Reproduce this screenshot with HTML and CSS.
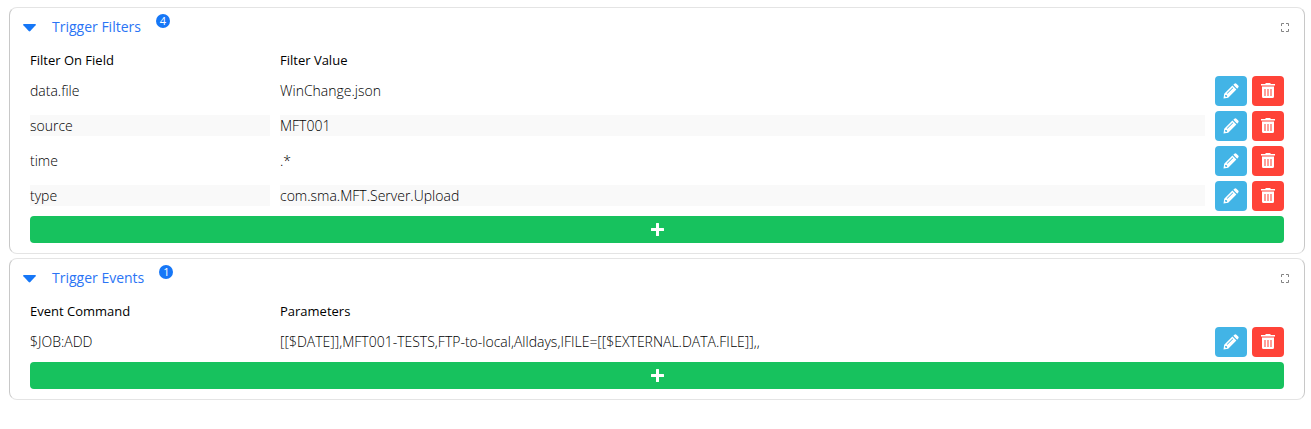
FILE: index.html
```html
<!DOCTYPE html>
<html lang="en">
<head>
<meta charset="utf-8">
<title>Trigger Filters and Events</title>
<link rel="stylesheet" href="styles.css">
</head>
<body>
<svg class="symbols" aria-hidden="true">
  <symbol id="pencil" viewBox="0 0 16 16">
    <path fill="#fff" fill-rule="evenodd" d="M9.4 2.6 13.4 6.6 5.2 14.8 .5 15.5 1.2 10.8zM10.3 1.7 11.4.7Q12.4-.1 13.4.8L15.2 2.6Q16.1 3.6 15.2 4.6L14.2 5.7zM3.8 10.2 4.4 10.8 10.2 5 9.6 4.4zM2.3 11.9 1.9 13 3 14.1 4.1 13.7 4 12.2z"/>
  </symbol>
  <symbol id="trash" viewBox="0 0 14 16">
    <path fill="#fff" d="M4 1 5 0H9L10 1H14V2.4H0V1zM1 3.5H13V13.5Q13 15 11.5 15H2.5Q1 15 1 13.5z"/>
    <path fill="#ff9f99" d="M3 6H5V13H3zM6 6H8V13H6zM9 6H11V13H9z"/>
  </symbol>
  <symbol id="plus" viewBox="0 0 13 13">
    <path fill="#fff" d="M5.5 0H7.5Q8 0 8 .5V5H12.5Q13 5 13 5.5V7.5Q13 8 12.5 8H8V12.5Q8 13 7.5 13H5.5Q5 13 5 12.5V8H.5Q0 8 0 7.5V5.5Q0 5 .5 5H5V.5Q5 0 5.5 0z"/>
  </symbol>
  <symbol id="expand" viewBox="0 0 8 9">
    <path fill="none" stroke="#858585" d="M.5 3V.5H3M5 .5H7.5V3M7.5 6V8.5H5M3 8.5H.5V6"/>
  </symbol>
  <symbol id="caret" viewBox="0 0 13 8">
    <path fill="#1677f7" d="M.7 0H12.3Q13.3.4 12.6 1.2L7.3 7.1Q6.5 7.9 5.7 7.1L.4 1.2Q-.3.4.7 0z"/>
  </symbol>
</svg>
<main class="page">
  <section class="panel">
    <header class="panel-header">
      <button class="toggle" type="button" aria-expanded="true"><svg class="caret"><use href="#caret"/></svg><span class="title">Trigger Filters</span></button>
      <span class="badge">4</span>
      <button class="expand" type="button" aria-label="Expand Trigger Filters"><svg class="expand-icon"><use href="#expand"/></svg></button>
    </header>
    <table class="grid">
      <thead><tr><th class="key-col">Filter On Field</th><th>Filter Value</th><th class="action-col" aria-label="Actions"></th></tr></thead>
      <tbody>
        <tr><td><div class="cell">data.file</div></td><td><div class="cell">WinChange.json</div></td><td><div class="actions"><button class="action edit" type="button" aria-label="Edit data.file"><svg class="pencil"><use href="#pencil"/></svg></button><button class="action delete" type="button" aria-label="Delete data.file"><svg class="trash"><use href="#trash"/></svg></button></div></td></tr>
        <tr><td><div class="cell">source</div></td><td><div class="cell">MFT001</div></td><td><div class="actions"><button class="action edit" type="button" aria-label="Edit source"><svg class="pencil"><use href="#pencil"/></svg></button><button class="action delete" type="button" aria-label="Delete source"><svg class="trash"><use href="#trash"/></svg></button></div></td></tr>
        <tr><td><div class="cell">time</div></td><td><div class="cell">.*</div></td><td><div class="actions"><button class="action edit" type="button" aria-label="Edit time"><svg class="pencil"><use href="#pencil"/></svg></button><button class="action delete" type="button" aria-label="Delete time"><svg class="trash"><use href="#trash"/></svg></button></div></td></tr>
        <tr><td><div class="cell">type</div></td><td><div class="cell">com.sma.MFT.Server.Upload</div></td><td><div class="actions"><button class="action edit" type="button" aria-label="Edit type"><svg class="pencil"><use href="#pencil"/></svg></button><button class="action delete" type="button" aria-label="Delete type"><svg class="trash"><use href="#trash"/></svg></button></div></td></tr>
      </tbody>
    </table>
    <button class="add" type="button" aria-label="Add filter"><svg class="plus"><use href="#plus"/></svg></button>
  </section>
  <section class="panel">
    <header class="panel-header">
      <button class="toggle" type="button" aria-expanded="true"><svg class="caret"><use href="#caret"/></svg><span class="title">Trigger Events</span></button>
      <span class="badge">1</span>
      <button class="expand" type="button" aria-label="Expand Trigger Events"><svg class="expand-icon"><use href="#expand"/></svg></button>
    </header>
    <table class="grid">
      <thead><tr><th class="key-col">Event Command</th><th>Parameters</th><th class="action-col" aria-label="Actions"></th></tr></thead>
      <tbody>
        <tr><td><div class="cell">$JOB:ADD</div></td><td><div class="cell">[[$DATE]],MFT001-TESTS,FTP-to-local,Alldays,IFILE=[[$EXTERNAL.DATA.FILE]],,</div></td><td><div class="actions"><button class="action edit" type="button" aria-label="Edit event"><svg class="pencil"><use href="#pencil"/></svg></button><button class="action delete" type="button" aria-label="Delete event"><svg class="trash"><use href="#trash"/></svg></button></div></td></tr>
      </tbody>
    </table>
    <button class="add" type="button" aria-label="Add event"><svg class="plus"><use href="#plus"/></svg></button>
  </section>
</main>
</body>
</html>
```
FILE: styles.css
```css
* { box-sizing: border-box; }
body {
  margin: 0;
  background: #fff;
  color: #000;
  font: 300 14px/21px "Open Sans", sans-serif;
}
button {
  margin: 0;
  padding: 0;
  border: 0;
  background: none;
  font: inherit;
  cursor: pointer;
}
svg { display: block; }
.symbols { display: none; }
.page {
  display: flex;
  flex-direction: column;
  gap: 4px;
  padding: 7px 6px 7px 9px;
}
.panel {
  padding: 0 20px 10px;
  border: 1px solid #e4e4e4;
  border-left-color: #c8c8c8;
  border-right-color: #c8c8c8;
  border-radius: 8px;
}
.panel-header {
  display: flex;
  align-items: center;
  height: 38px;
  margin: 0 -5px 0 -7px;
}
.toggle {
  display: flex;
  align-items: center;
  gap: 16px;
  color: #2a74f5;
  font-weight: 400;
}
.title { padding-bottom: 2px; }
.caret { width: 13px; height: 8px; margin-top: 2px; }
.badge {
  width: 14px;
  height: 14px;
  margin: 0 auto 12px 15px;
  border-radius: 50%;
  background: #1677f7;
  color: #fff;
  font-size: 11px;
  font-weight: 400;
  line-height: 14px;
  text-align: center;
}
.expand-icon { width: 8px; height: 9px; }
.grid {
  width: 100%;
  border-collapse: collapse;
  table-layout: fixed;
}
.key-col { width: 250px; }
.action-col { width: 69px; }
.grid th {
  height: 30px;
  padding: 4px 0 5px;
  font-size: 13px;
  font-weight: 400;
  text-align: left;
}
.grid td { padding: 0 0 5px; vertical-align: top; }
.cell { margin: 4px 10px 0 0; overflow-wrap: anywhere; }
.grid tbody tr:nth-child(even) .cell { background: #f9f9f9; }
.actions { display: flex; gap: 5px; }
.action {
  display: flex;
  align-items: center;
  justify-content: center;
  width: 32px;
  height: 30px;
  border-radius: 4px;
}
.edit { background: #42b4e6; }
.delete { background: #ff4338; }
.pencil { width: 16px; height: 16px; }
.trash { width: 14px; height: 16px; }
.add {
  display: flex;
  align-items: center;
  justify-content: center;
  width: 100%;
  height: 27px;
  border-radius: 4px;
  background: #17c25e;
}
.plus { width: 13px; height: 13px; }
```
